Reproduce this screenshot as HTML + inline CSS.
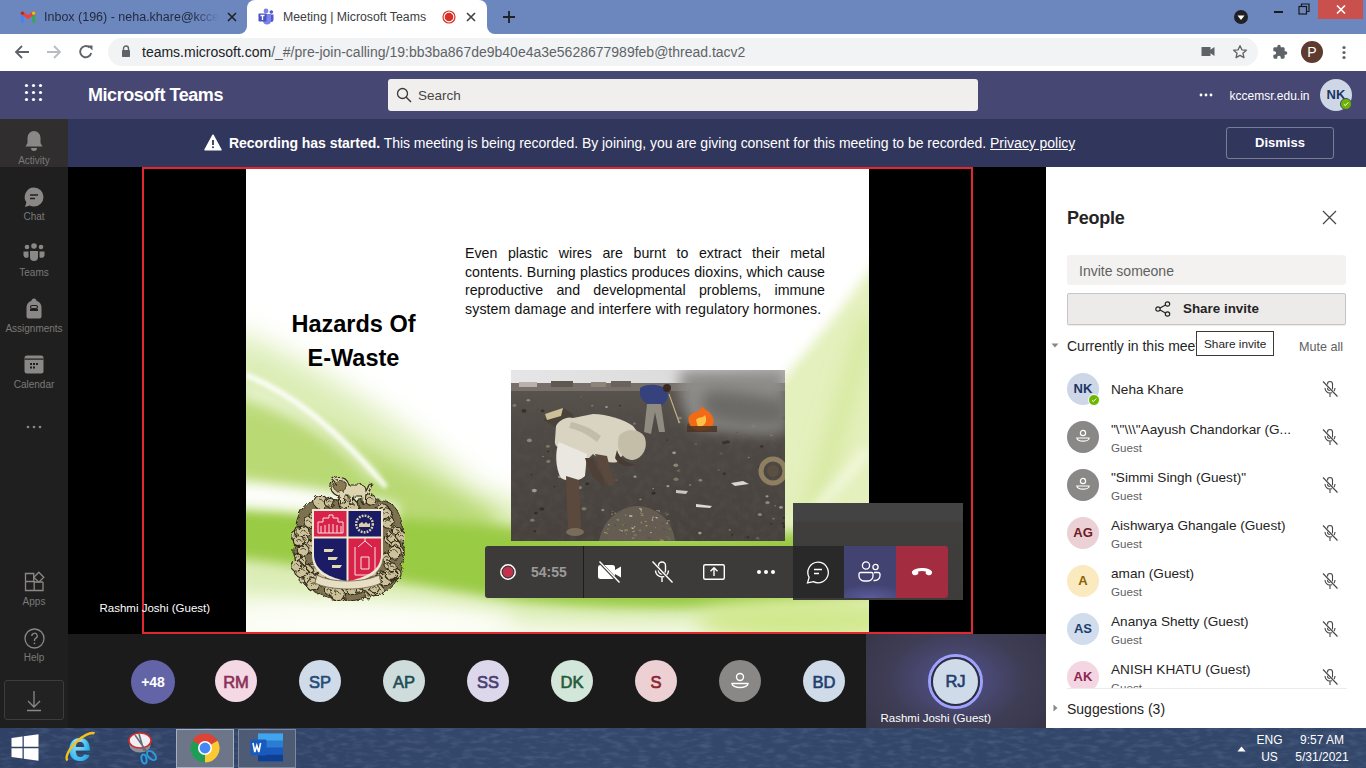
<!DOCTYPE html>
<html><head><meta charset="utf-8">
<style>
*{box-sizing:border-box;margin:0;padding:0}
html,body{width:1366px;height:768px;overflow:hidden;font-family:"Liberation Sans",sans-serif;background:#000}
.abs{position:absolute}
#tabbar{left:0;top:0;width:1366px;height:34px;background:#6b87bf}
#toolbar{left:0;top:34px;width:1366px;height:37px;background:#fff}
#addr{left:109px;top:38px;width:1040px;height:28px;background:#f1f3f4;border-radius:14px}
#thead{left:0;top:71px;width:1366px;height:48px;background:#464775}
#banner{left:68px;top:119px;width:1298px;height:48px;background:#33365d}
#rail{left:0;top:119px;width:68px;height:608px;background:#201f1f}
#stage{left:68px;top:167px;width:978px;height:466px;background:#000}
#strip{left:68px;top:633px;width:978px;height:94px;background:#1f1f1f}
#people{left:1046px;top:167px;width:320px;height:560px;background:#fff}
.rl{left:0;width:68px;text-align:center;font-size:10px;color:#7a7978;white-space:nowrap}
.av{position:absolute;width:42px;height:42px;border-radius:50%;text-align:center;line-height:44px;font-size:16.5px;font-weight:normal;-webkit-text-stroke:0.65px currentColor}
.pav{width:32px;height:32px;border-radius:50%;text-align:center;line-height:32px;font-size:13px;font-weight:bold}
.pn{font-size:13.6px;color:#252424;white-space:nowrap}
.pg{font-size:11.6px;color:#616161;white-space:nowrap}
.tb{font-size:12px;color:#fff;text-align:center;white-space:nowrap}
.sl{color:#000;white-space:nowrap}
.jl{text-align:justify;text-align-last:justify}
#taskbar{left:0;top:727px;width:1366px;height:41px;background:#2a3a5c}
</style></head><body>
<!-- TAB BAR -->
<div class="abs" style="left:0;top:0;width:1366px;height:34px;background:#6c86be"></div>
<!-- gmail tab -->
<svg class="abs" style="left:20px;top:10px" width="16" height="14" viewBox="0 0 16 14">
<path d="M2.3 3.5V11.5" stroke="#4285f4" stroke-width="3" stroke-linecap="round"/>
<path d="M13.7 3.5V11.5" stroke="#34a853" stroke-width="3" stroke-linecap="round"/>
<path d="M2.5 3L8 7.3 13.5 3" fill="none" stroke="#ea4335" stroke-width="3" stroke-linecap="round" stroke-linejoin="round"/>
<circle cx="2.4" cy="3.2" r="1.6" fill="#c5221f"/><circle cx="13.6" cy="3.2" r="1.6" fill="#fbbc04"/>
</svg>
<div class="abs" style="left:44px;top:9.5px;width:175px;height:18px;overflow:hidden;white-space:nowrap;font-size:12.5px;color:#1f2a3c;-webkit-mask-image:linear-gradient(90deg,#000 85%,transparent)">Inbox (196) - neha.khare@kccemsr.edu.in</div>
<svg class="abs" style="left:227px;top:12px" width="10" height="10" viewBox="0 0 10 10"><path d="M1 1L9 9M9 1L1 9" stroke="#202124" stroke-width="1.6"/></svg>
<!-- active tab -->
<div class="abs" style="left:247px;top:0;width:240px;height:34px;background:#fff;border-radius:8px 8px 0 0"></div>
<div class="abs" style="left:239px;top:26px;width:8px;height:8px;background:#fff"></div>
<div class="abs" style="left:239px;top:26px;width:8px;height:8px;background:#6c86be;border-bottom-right-radius:8px"></div>
<div class="abs" style="left:487px;top:26px;width:8px;height:8px;background:#fff"></div>
<div class="abs" style="left:487px;top:26px;width:8px;height:8px;background:#6c86be;border-bottom-left-radius:8px"></div>
<svg class="abs" style="left:258px;top:8px" width="17" height="17" viewBox="0 0 17 17">
<circle cx="8" cy="3" r="2.4" fill="#7b83eb"/><circle cx="13.3" cy="4" r="1.8" fill="#5059c9"/>
<path d="M10.5 6.5h5v5a2.5 2.5 0 0 1-5 0z" fill="#5059c9"/>
<path d="M5 6h8v6.5a4 4 0 0 1-8 0z" fill="#7b83eb"/>
<rect x="0.5" y="5.5" width="8" height="8" rx="0.8" fill="#4b53bc"/>
<path d="M2.5 7.5h4M4.5 7.5v4.5" stroke="#fff" stroke-width="1.3"/>
</svg>
<div id="mtg" class="abs" style="left:283px;top:9.5px;font-size:12.3px;color:#3c4043;white-space:nowrap">Meeting | Microsoft Teams</div>
<svg class="abs" style="left:442px;top:10px" width="14" height="14" viewBox="0 0 14 14"><circle cx="7" cy="7" r="6" fill="none" stroke="#d93025" stroke-width="1.2"/><circle cx="7" cy="7" r="4.3" fill="#d93025"/></svg>
<svg class="abs" style="left:466px;top:12px" width="10" height="10" viewBox="0 0 10 10"><path d="M1 1L9 9M9 1L1 9" stroke="#3c4043" stroke-width="1.6"/></svg>
<svg class="abs" style="left:502px;top:10px" width="14" height="14" viewBox="0 0 14 14"><path d="M7 1V13M1 7H13" stroke="#202124" stroke-width="1.8"/></svg>
<!-- window controls -->
<svg class="abs" style="left:1233px;top:9px" width="16" height="16" viewBox="0 0 16 16"><circle cx="8" cy="8" r="7" fill="#202124"/><path d="M4.5 6.5h7L8 11z" fill="#fff"/></svg>
<div class="abs" style="left:1274px;top:11px;width:9px;height:2px;background:#1a1a1a"></div>
<svg class="abs" style="left:1298px;top:3px" width="12" height="12" viewBox="0 0 12 12"><rect x="1" y="3.5" width="7.5" height="7.5" fill="none" stroke="#1a1a1a" stroke-width="1.2"/><path d="M3.5 3.5V1h7.5v7.5H8.5" fill="none" stroke="#1a1a1a" stroke-width="1.2"/></svg>
<div class="abs" style="left:1318px;top:0;width:45px;height:19px;background:#c9504c"></div>
<svg class="abs" style="left:1336px;top:5px" width="10" height="9" viewBox="0 0 10 9"><path d="M1 0.5L9 8.5M9 0.5L1 8.5" stroke="#fff" stroke-width="1.6"/></svg>
<!-- TOOLBAR -->
<div class="abs" style="left:0;top:34px;width:1366px;height:37px;background:#fff"></div>
<svg class="abs" style="left:14px;top:44px" width="16" height="16" viewBox="0 0 16 16"><path d="M15 8H2.5M8 2L2 8L8 14" fill="none" stroke="#5f6368" stroke-width="1.8"/></svg>
<svg class="abs" style="left:46px;top:44px" width="16" height="16" viewBox="0 0 16 16"><path d="M1 8H13.5M8 2L14 8L8 14" fill="none" stroke="#b9bcc0" stroke-width="1.8"/></svg>
<svg class="abs" style="left:78px;top:44px" width="16" height="16" viewBox="0 0 16 16"><path d="M13.2 9A5.6 5.6 0 1 1 11.5 3.5" fill="none" stroke="#5f6368" stroke-width="1.9"/><path d="M9.5 1.5h5v5z" fill="#5f6368"/></svg>
<div class="abs" style="left:108px;top:38px;width:1150px;height:28px;background:#f1f3f4;border-radius:14px"></div>
<svg class="abs" style="left:121px;top:45px" width="10" height="12" viewBox="0 0 10 12"><path d="M2.5 5V3.5a2.5 2.5 0 0 1 5 0V5" fill="none" stroke="#5f6368" stroke-width="1.4"/><rect x="1" y="5" width="8" height="7" rx="0.7" fill="#5f6368"/></svg>
<div id="url" class="abs" style="left:142px;top:44px;font-size:14px;color:#202124;white-space:nowrap">teams.microsoft.com<span style="color:#5f6368">/_#/pre-join-calling/19:bb3ba867de9b40e4a3e5628677989feb@thread.tacv2</span></div>
<svg class="abs" style="left:1201px;top:46px" width="14" height="11" viewBox="0 0 14 11"><rect x="0.5" y="1" width="9" height="9" rx="0.5" fill="#5f6368"/><path d="M9 4L13.5 1V10L9 7z" fill="#5f6368"/></svg>
<svg class="abs" style="left:1232px;top:44px" width="16" height="16" viewBox="0 0 24 24"><path d="M12 2.5l2.8 6.2 6.7.6-5.1 4.5 1.5 6.6L12 17l-5.9 3.4 1.5-6.6-5.1-4.5 6.7-.6z" fill="none" stroke="#5f6368" stroke-width="2" stroke-linejoin="round"/></svg>
<svg class="abs" style="left:1272px;top:44px" width="16" height="16" viewBox="0 0 24 24"><path d="M20.5 11H19V7c0-1.1-.9-2-2-2h-4V3.5a2.5 2.5 0 0 0-5 0V5H4c-1.1 0-2 .9-2 2v3.8h1.5a2.7 2.7 0 0 1 0 5.4H2V20c0 1.1.9 2 2 2h3.8v-1.5a2.7 2.7 0 0 1 5.4 0V22H17c1.1 0 2-.9 2-2v-4h1.5a2.5 2.5 0 0 0 0-5z" fill="#5f6368"/></svg>
<div class="abs" style="left:1301px;top:41px;width:22px;height:22px;border-radius:50%;background:#5e3a2f;color:#fff;font-size:14px;line-height:22px;text-align:center">P</div>
<svg class="abs" style="left:1341px;top:45px" width="6" height="15" viewBox="0 0 6 15"><circle cx="3" cy="2.5" r="1.6" fill="#5f6368"/><circle cx="3" cy="7.5" r="1.6" fill="#5f6368"/><circle cx="3" cy="12.5" r="1.6" fill="#5f6368"/></svg>
<!-- TEAMS HEADER -->
<div class="abs" style="left:0;top:71px;width:1366px;height:48px;background:#474774"></div>
<svg class="abs" style="left:24px;top:83px" width="20" height="20" viewBox="0 0 20 20" fill="#fff">
<circle cx="2.5" cy="2.5" r="1.6"/><circle cx="9.5" cy="2.5" r="1.6"/><circle cx="16.5" cy="2.5" r="1.6"/>
<circle cx="2.5" cy="9.5" r="1.6"/><circle cx="9.5" cy="9.5" r="1.6"/><circle cx="16.5" cy="9.5" r="1.6"/>
<circle cx="2.5" cy="16.5" r="1.6"/><circle cx="9.5" cy="16.5" r="1.6"/><circle cx="16.5" cy="16.5" r="1.6"/>
</svg>
<div id="mt" class="abs" style="left:88px;top:85px;font-size:18px;letter-spacing:-0.45px;font-weight:bold;color:#fff;white-space:nowrap">Microsoft Teams</div>
<div class="abs" style="left:388px;top:79px;width:590px;height:32px;background:#f0efee;border-radius:3px"></div>
<svg class="abs" style="left:396px;top:87px" width="16" height="16" viewBox="0 0 16 16"><circle cx="6.5" cy="6.5" r="5" fill="none" stroke="#3b3a39" stroke-width="1.3"/><path d="M10 10L15 15" stroke="#3b3a39" stroke-width="1.4"/></svg>
<div id="srch" class="abs" style="left:418px;top:87.5px;font-size:13.5px;color:#484644;white-space:nowrap">Search</div>
<svg class="abs" style="left:1199px;top:93px" width="14" height="4" viewBox="0 0 14 4" fill="#fff"><circle cx="2" cy="2" r="1.4"/><circle cx="7" cy="2" r="1.4"/><circle cx="12" cy="2" r="1.4"/></svg>
<div id="org" class="abs" style="left:1229.5px;top:88.5px;font-size:12px;color:#fff;white-space:nowrap">kccemsr.edu.in</div>
<div class="abs" style="left:1320px;top:79px;width:32px;height:32px;border-radius:50%;background:#cdd7e6;color:#1b3563;font-size:13px;font-weight:bold;line-height:32px;text-align:center">NK</div>
<div class="abs" style="left:1340px;top:98px;width:12px;height:12px;border-radius:50%;background:#6bb700;border:1.5px solid #474774"></div>
<svg class="abs" style="left:1343px;top:101px" width="6" height="6" viewBox="0 0 6 6"><path d="M0.8 3.2L2.3 4.6L5.2 1.5" fill="none" stroke="#fff" stroke-width="1"/></svg>
<!-- BANNER -->
<div class="abs" style="left:68px;top:119px;width:1298px;height:48px;background:#31365c"></div>
<svg class="abs" style="left:204px;top:134px" width="18" height="17" viewBox="0 0 18 17"><path d="M9 1.2L17 15.8H1z" fill="#fff" stroke="#fff" stroke-width="1.5" stroke-linejoin="round"/><path d="M9 6v5" stroke="#31365c" stroke-width="1.8"/><circle cx="9" cy="13.3" r="1" fill="#31365c"/></svg>
<div id="bnr" class="abs" style="left:229px;top:135px;font-size:14px;letter-spacing:-0.03px;color:#fff;white-space:nowrap"><b>Recording has started.</b> This meeting is being recorded. By joining, you are giving consent for this meeting to be recorded. <u>Privacy policy</u></div>
<div class="abs" style="left:1226px;top:127px;width:108px;height:32px;border:1px solid rgba(255,255,255,0.35);border-radius:3px;color:#fff;font-size:13px;font-weight:bold;text-align:center;line-height:30px">Dismiss</div>
<!-- LEFT RAIL -->
<div class="abs" style="left:0;top:119px;width:68px;height:609px;background:#201f1f"></div>
<div class="abs" style="left:0;top:119px;width:68px;height:48px;background:#302e2e"></div>
<div class="rl abs" style="top:155px">Activity</div>
<div class="rl abs" style="top:211px">Chat</div>
<div class="rl abs" style="top:267px">Teams</div>
<div class="rl abs" style="top:323px">Assignments</div>
<div class="rl abs" style="top:379px">Calendar</div>
<div class="rl abs" style="top:596px">Apps</div>
<div class="rl abs" style="top:652px">Help</div>
<svg class="abs" style="left:24px;top:130px" width="20" height="22" viewBox="0 0 20 22" fill="#8a8886"><path d="M10 1a6.5 6.5 0 0 0-6.5 6.5V13L1.5 16.5h17L16.5 13V7.5A6.5 6.5 0 0 0 10 1z"/><path d="M7 18a3 3 0 0 0 6 0z"/></svg>
<svg class="abs" style="left:23px;top:186px" width="22" height="22" viewBox="0 0 22 22"><path d="M11 1.5a9.5 9.5 0 0 1 0 19 9.5 9.5 0 0 1-4.3-1L2 21l1.4-4.6A9.5 9.5 0 0 1 11 1.5z" fill="#8a8886"/><path d="M7 9h8M7 12.5h5" stroke="#201f1f" stroke-width="1.6"/></svg>
<svg class="abs" style="left:23px;top:243px" width="22" height="19" viewBox="0 0 22 19" fill="#8a8886"><circle cx="11" cy="3" r="2.8"/><circle cx="4" cy="4" r="2.3"/><circle cx="18" cy="4" r="2.3"/><path d="M7 8h8v6a4 4 0 0 1-8 0z"/><path d="M0.5 8.5h5v5.5a3 3 0 0 1-5-1.5z"/><path d="M16.5 8.5h5v4a3 3 0 0 1-5 1.5z"/></svg>
<svg class="abs" style="left:24px;top:298px" width="20" height="21" viewBox="0 0 20 21" fill="#8a8886"><path d="M10 0.5c1.5 0 2.5 1 2.5 2.3 3 .8 5 3.5 5 6.7v9a2 2 0 0 1-2 2h-11a2 2 0 0 1-2-2v-9c0-3.2 2-5.9 5-6.7C7.5 1.5 8.5.5 10 .5z"/><path d="M6 11h8v2H6z" fill="#201f1f"/><rect x="6.5" y="7.5" width="7" height="3" rx="1.5" fill="none" stroke="#201f1f" stroke-width="1.2"/></svg>
<svg class="abs" style="left:24px;top:355px" width="20" height="19" viewBox="0 0 20 19"><rect x="0.5" y="0.5" width="19" height="18" rx="2.5" fill="#8a8886"/><rect x="0.5" y="3.5" width="19" height="1.2" fill="#201f1f"/><g fill="#201f1f"><rect x="6" y="8" width="2" height="2"/><rect x="9" y="8" width="2" height="2"/><rect x="12" y="8" width="2" height="2"/><rect x="6" y="11.5" width="2" height="2"/><rect x="9" y="11.5" width="2" height="2"/></g></svg>
<svg class="abs" style="left:26px;top:425px" width="16" height="4" viewBox="0 0 16 4" fill="#8a8886"><circle cx="2" cy="2" r="1.3"/><circle cx="8" cy="2" r="1.3"/><circle cx="14" cy="2" r="1.3"/></svg>
<svg class="abs" style="left:24px;top:571px" width="21" height="21" viewBox="0 0 21 21" fill="none" stroke="#8a8886" stroke-width="1.3"><path d="M1.5 10.5V19.5H19V11"/><path d="M1.5 10.5H10.2V19.5M1.5 6.5V10.5M1.5 6.5V2.5H9.7V10.5M10.2 11H19"/><path d="M14.8 1.2L19.8 6.2 14.8 11.2 9.8 6.2z"/></svg>
<svg class="abs" style="left:24px;top:628px" width="21" height="21" viewBox="0 0 21 21"><circle cx="10.5" cy="10.5" r="9.5" fill="none" stroke="#8a8886" stroke-width="1.3"/><path d="M7.8 8a2.7 2.7 0 1 1 3.8 2.4c-.8.4-1.1.9-1.1 1.7v.8" fill="none" stroke="#8a8886" stroke-width="1.3"/><circle cx="10.5" cy="15.3" r="0.9" fill="#8a8886"/></svg>
<div class="abs" style="left:4px;top:680px;width:60px;height:40px;border:1px solid #3d3c3b;border-radius:3px;background:#232222"></div>
<svg class="abs" style="left:26px;top:690px" width="16" height="22" viewBox="0 0 16 22" fill="none" stroke="#8a8886" stroke-width="1.3"><path d="M8 1v16M2 11l6 6 6-6M1 20.5h14"/></svg>
<!-- STAGE -->
<div class="abs" style="left:68px;top:167px;width:978px;height:467px;background:#000"></div>
<div id="slide" class="abs" style="left:246px;top:169px;width:623px;height:464px;background:#fff;overflow:hidden">
<svg class="abs" style="left:0;top:0" width="623" height="464" viewBox="0 0 623 464">
<defs>
<filter id="b2" filterUnits="userSpaceOnUse" x="-60" y="-60" width="743" height="584"><feGaussianBlur stdDeviation="2"/></filter>
<filter id="b6" filterUnits="userSpaceOnUse" x="-60" y="-60" width="743" height="584"><feGaussianBlur stdDeviation="6"/></filter>
<filter id="b10" filterUnits="userSpaceOnUse" x="-60" y="-60" width="743" height="584"><feGaussianBlur stdDeviation="10"/></filter>
<filter id="b14" filterUnits="userSpaceOnUse" x="-60" y="-60" width="743" height="584"><feGaussianBlur stdDeviation="14"/></filter>
</defs>
<rect width="623" height="464" fill="#fff"/>
<path d="M-20 160 C40 178 150 245 230 318 C300 352 420 360 640 345 L640 480 L-20 480 Z" fill="#dcedb6" filter="url(#b14)"/>
<path d="M640 80 L610 120 C580 160 545 200 520 230 L520 470 L640 470 Z" fill="#e4f0bd" filter="url(#b6)"/>
<path d="M623 150 C600 230 580 300 560 360" stroke="#d3e89a" stroke-width="16" fill="none" filter="url(#b10)"/>
<path d="M623 280 C590 320 560 350 530 380" stroke="#f6fae8" stroke-width="8" fill="none" filter="url(#b6)"/>
<path d="M-20 225 C60 245 150 290 250 345 L250 400 C150 370 60 330 -20 310 Z" fill="#b9d975" filter="url(#b10)"/>
<path d="M-20 340 C80 342 180 352 268 358 C400 372 520 370 640 350 L640 425 C520 440 400 445 268 432 C180 418 80 398 -20 388 Z" fill="#9acb44" filter="url(#b6)"/>
<path d="M-10 325 C40 327 90 333 150 348" stroke="#fff" stroke-width="24" fill="none" filter="url(#b6)" opacity="0.95"/>
<path d="M0 206 C50 226 95 265 140 318" stroke="#fff" stroke-width="5" fill="none" filter="url(#b2)"/>
<path d="M0 222 C50 238 90 268 130 310" stroke="#fff" stroke-width="10" fill="none" filter="url(#b6)" opacity="0.5"/>
<path d="M-20 425 C80 428 180 440 268 452 C400 460 520 456 640 442 L640 480 L-20 480 Z" fill="#f6faea" filter="url(#b10)"/>
<ellipse cx="560" cy="452" rx="110" ry="22" fill="#d2e88e" filter="url(#b10)"/>
<ellipse cx="120" cy="455" rx="150" ry="18" fill="#fdfef8" filter="url(#b10)"/>
</svg>
<svg class="abs" style="left:265px;top:201px" width="274" height="171" viewBox="0 0 274 171">
<defs>
<filter id="pb1" filterUnits="userSpaceOnUse" x="-10" y="-10" width="294" height="191"><feGaussianBlur stdDeviation="0.7"/></filter>
<filter id="pb2" filterUnits="userSpaceOnUse" x="-10" y="-10" width="294" height="191"><feGaussianBlur stdDeviation="2"/></filter>
<filter id="pb3" filterUnits="userSpaceOnUse" x="-30" y="-30" width="334" height="231"><feGaussianBlur stdDeviation="7"/></filter>
<filter id="noise" filterUnits="userSpaceOnUse" x="0" y="21" width="274" height="150"><feTurbulence type="fractalNoise" baseFrequency="0.12" numOctaves="3" seed="3"/><feColorMatrix values="0 0 0 0 0.1  0 0 0 0 0.09  0 0 0 0 0.08  0 0 0 1.6 -0.6"/></filter>
<linearGradient id="gnd" x1="0" y1="0" x2="0" y2="1"><stop offset="0" stop-color="#5e5852"/><stop offset="0.35" stop-color="#4e4944"/><stop offset="1" stop-color="#46413c"/></linearGradient>
<linearGradient id="sky" x1="0" y1="0" x2="1" y2="0"><stop offset="0" stop-color="#e6e6e8"/><stop offset="0.6" stop-color="#dcdcdc"/><stop offset="1" stop-color="#b9b9b9"/></linearGradient>
</defs>
<rect width="274" height="171" fill="url(#gnd)"/>
<rect width="274" height="15" fill="url(#sky)"/>
<g filter="url(#pb1)"><rect y="13" width="274" height="8" fill="#77706a"/><rect x="8" y="12" width="18" height="5" fill="#b8b2aa"/><rect x="40" y="11" width="22" height="6" fill="#5e5850"/><rect x="80" y="12" width="15" height="5" fill="#8c857a"/><rect x="100" y="11" width="20" height="6" fill="#6a645c"/></g>
<rect y="20" width="274" height="151" filter="url(#noise)" opacity="0.5"/>
<ellipse cx="124.0" cy="106.7" rx="1.6" ry="1.1" fill="#b5ad9a" opacity="0.8"/>
<ellipse cx="234.3" cy="52.7" rx="1.6" ry="1.2" fill="#2e2b28" opacity="0.8"/>
<ellipse cx="168.2" cy="52.2" rx="1.3" ry="1.0" fill="#b5ad9a" opacity="0.8"/>
<ellipse cx="24.8" cy="143.2" rx="1.9" ry="1.4" fill="#2a2724" opacity="0.8"/>
<ellipse cx="163.1" cy="82.8" rx="1.9" ry="1.4" fill="#b5ad9a" opacity="0.8"/>
<ellipse cx="168.7" cy="48.0" rx="2.2" ry="1.6" fill="#8a8273" opacity="0.8"/>
<ellipse cx="17.3" cy="30.2" rx="1.8" ry="1.3" fill="#9d9584" opacity="0.8"/>
<ellipse cx="213.2" cy="72.6" rx="2.3" ry="1.6" fill="#2e2b28" opacity="0.8"/>
<ellipse cx="142.2" cy="118.5" rx="0.8" ry="0.6" fill="#b5ad9a" opacity="0.8"/>
<ellipse cx="23.3" cy="120.6" rx="2.5" ry="1.8" fill="#b5ad9a" opacity="0.8"/>
<ellipse cx="272.8" cy="147.7" rx="1.3" ry="0.9" fill="#2a2724" opacity="0.8"/>
<ellipse cx="207.7" cy="99.9" rx="1.0" ry="0.7" fill="#8a8273" opacity="0.8"/>
<ellipse cx="210.0" cy="83.5" rx="1.5" ry="1.1" fill="#6d665c" opacity="0.8"/>
<ellipse cx="262.5" cy="148.7" rx="1.2" ry="0.9" fill="#8a8273" opacity="0.8"/>
<ellipse cx="254.0" cy="32.6" rx="2.5" ry="1.8" fill="#b5ad9a" opacity="0.8"/>
<ellipse cx="108.9" cy="35.7" rx="1.2" ry="0.8" fill="#2a2724" opacity="0.8"/>
<ellipse cx="184.9" cy="74.2" rx="1.4" ry="1.0" fill="#6d665c" opacity="0.8"/>
<ellipse cx="264.2" cy="135.7" rx="1.1" ry="0.8" fill="#8a8273" opacity="0.8"/>
<ellipse cx="193.7" cy="26.6" rx="2.2" ry="1.6" fill="#b5ad9a" opacity="0.8"/>
<ellipse cx="48.7" cy="106.7" rx="1.7" ry="1.2" fill="#b5ad9a" opacity="0.8"/>
<ellipse cx="270.0" cy="137.4" rx="1.9" ry="1.4" fill="#b5ad9a" opacity="0.8"/>
<ellipse cx="31.9" cy="86.4" rx="0.8" ry="0.6" fill="#9d9584" opacity="0.8"/>
<ellipse cx="236.8" cy="167.3" rx="1.4" ry="1.0" fill="#2e2b28" opacity="0.8"/>
<ellipse cx="242.5" cy="55.8" rx="2.5" ry="1.8" fill="#b5ad9a" opacity="0.8"/>
<ellipse cx="165.0" cy="109.2" rx="2.5" ry="1.8" fill="#8a8273" opacity="0.8"/>
<ellipse cx="58.4" cy="62.7" rx="1.4" ry="1.0" fill="#2e2b28" opacity="0.8"/>
<ellipse cx="81.2" cy="35.7" rx="1.2" ry="0.9" fill="#8a8273" opacity="0.8"/>
<ellipse cx="174.4" cy="27.3" rx="1.5" ry="1.0" fill="#6d665c" opacity="0.8"/>
<ellipse cx="124.2" cy="165.0" rx="2.2" ry="1.6" fill="#b5ad9a" opacity="0.8"/>
<ellipse cx="37.2" cy="81.4" rx="1.1" ry="0.8" fill="#2a2724" opacity="0.8"/>
<ellipse cx="248.9" cy="144.4" rx="2.1" ry="1.5" fill="#9d9584" opacity="0.8"/>
<ellipse cx="43.4" cy="116.8" rx="1.2" ry="0.8" fill="#2e2b28" opacity="0.8"/>
<ellipse cx="260.3" cy="153.8" rx="1.0" ry="0.7" fill="#2e2b28" opacity="0.8"/>
<ellipse cx="13.0" cy="40.9" rx="2.5" ry="1.8" fill="#2e2b28" opacity="0.8"/>
<ellipse cx="65.3" cy="127.9" rx="1.5" ry="1.1" fill="#6d665c" opacity="0.8"/>
<ellipse cx="247.9" cy="96.7" rx="1.1" ry="0.8" fill="#2e2b28" opacity="0.8"/>
<ellipse cx="197.4" cy="35.0" rx="1.6" ry="1.2" fill="#9d9584" opacity="0.8"/>
<ellipse cx="179.1" cy="114.9" rx="1.3" ry="0.9" fill="#8a8273" opacity="0.8"/>
<ellipse cx="251.4" cy="54.8" rx="1.0" ry="0.7" fill="#8a8273" opacity="0.8"/>
<ellipse cx="112.7" cy="61.4" rx="1.1" ry="0.8" fill="#8a8273" opacity="0.8"/>
<ellipse cx="101.0" cy="108.5" rx="1.0" ry="0.7" fill="#9d9584" opacity="0.8"/>
<ellipse cx="37.9" cy="90.8" rx="1.9" ry="1.4" fill="#6d665c" opacity="0.8"/>
<ellipse cx="189.4" cy="110.3" rx="1.8" ry="1.3" fill="#9d9584" opacity="0.8"/>
<ellipse cx="253.1" cy="94.3" rx="2.0" ry="1.4" fill="#6d665c" opacity="0.8"/>
<ellipse cx="263.8" cy="28.1" rx="1.0" ry="0.7" fill="#2a2724" opacity="0.8"/>
<ellipse cx="18.4" cy="70.4" rx="2.5" ry="1.8" fill="#9d9584" opacity="0.8"/>
<ellipse cx="20.6" cy="104.7" rx="0.9" ry="0.7" fill="#2a2724" opacity="0.8"/>
<ellipse cx="256.5" cy="132.6" rx="2.2" ry="1.6" fill="#9d9584" opacity="0.8"/>
<ellipse cx="250.7" cy="76.4" rx="1.6" ry="1.2" fill="#2a2724" opacity="0.8"/>
<ellipse cx="21.3" cy="150.2" rx="2.3" ry="1.6" fill="#8a8273" opacity="0.8"/>
<ellipse cx="156.9" cy="116.2" rx="1.5" ry="1.1" fill="#b5ad9a" opacity="0.8"/>
<ellipse cx="3.4" cy="35.5" rx="1.9" ry="1.4" fill="#8a8273" opacity="0.8"/>
<ellipse cx="272.2" cy="153.4" rx="1.4" ry="1.0" fill="#2a2724" opacity="0.8"/>
<ellipse cx="256.0" cy="126.3" rx="1.6" ry="1.1" fill="#b5ad9a" opacity="0.8"/>
<ellipse cx="229.7" cy="37.2" rx="0.9" ry="0.6" fill="#2e2b28" opacity="0.8"/>
<ellipse cx="164.8" cy="95.2" rx="2.4" ry="1.7" fill="#9d9584" opacity="0.8"/>
<ellipse cx="30.9" cy="138.9" rx="2.4" ry="1.7" fill="#2a2724" opacity="0.8"/>
<ellipse cx="70.1" cy="26.7" rx="1.1" ry="0.8" fill="#6d665c" opacity="0.8"/>
<ellipse cx="167.6" cy="100.7" rx="1.9" ry="1.4" fill="#6d665c" opacity="0.8"/>
<ellipse cx="121.1" cy="155.2" rx="1.5" ry="1.1" fill="#6d665c" opacity="0.8"/>
<ellipse cx="68.7" cy="117.6" rx="2.3" ry="1.7" fill="#9d9584" opacity="0.8"/>
<ellipse cx="105.3" cy="110.1" rx="1.2" ry="0.9" fill="#6d665c" opacity="0.8"/>
<ellipse cx="36.9" cy="76.2" rx="2.0" ry="1.5" fill="#8a8273" opacity="0.8"/>
<ellipse cx="260.3" cy="65.4" rx="1.0" ry="0.7" fill="#9d9584" opacity="0.8"/>
<ellipse cx="129.2" cy="160.2" rx="1.5" ry="1.1" fill="#b5ad9a" opacity="0.8"/>
<ellipse cx="142.5" cy="123.1" rx="2.2" ry="1.6" fill="#2a2724" opacity="0.8"/>
<ellipse cx="269.1" cy="91.1" rx="2.2" ry="1.6" fill="#8a8273" opacity="0.8"/>
<ellipse cx="76.2" cy="113.7" rx="2.0" ry="1.5" fill="#2a2724" opacity="0.8"/>
<ellipse cx="156.3" cy="70.1" rx="0.9" ry="0.6" fill="#2e2b28" opacity="0.8"/>
<ellipse cx="37.2" cy="91.4" rx="2.1" ry="1.5" fill="#8a8273" opacity="0.8"/>
<ellipse cx="73.0" cy="138.8" rx="2.5" ry="1.8" fill="#8a8273" opacity="0.8"/>
<ellipse cx="31.6" cy="40.9" rx="1.9" ry="1.4" fill="#2e2b28" opacity="0.8"/>
<ellipse cx="221.2" cy="164.9" rx="1.2" ry="0.8" fill="#2a2724" opacity="0.8"/>
<ellipse cx="225.7" cy="62.4" rx="0.9" ry="0.6" fill="#2a2724" opacity="0.8"/>
<ellipse cx="129.4" cy="129.3" rx="1.2" ry="0.9" fill="#9d9584" opacity="0.8"/>
<ellipse cx="213.3" cy="103.8" rx="1.7" ry="1.2" fill="#2e2b28" opacity="0.8"/>
<ellipse cx="273.1" cy="48.2" rx="2.4" ry="1.7" fill="#2a2724" opacity="0.8"/>
<ellipse cx="23.9" cy="161.2" rx="1.5" ry="1.1" fill="#2a2724" opacity="0.8"/>
<ellipse cx="123.4" cy="53.7" rx="1.5" ry="1.1" fill="#8a8273" opacity="0.8"/>
<ellipse cx="155.9" cy="153.4" rx="1.6" ry="1.2" fill="#6d665c" opacity="0.8"/>
<ellipse cx="178.5" cy="54.9" rx="2.3" ry="1.6" fill="#2a2724" opacity="0.8"/>
<ellipse cx="218.7" cy="159.9" rx="1.2" ry="0.9" fill="#8a8273" opacity="0.8"/>
<ellipse cx="246.6" cy="168.2" rx="1.7" ry="1.2" fill="#6d665c" opacity="0.8"/>
<ellipse cx="216.7" cy="71.8" rx="2.3" ry="1.6" fill="#2a2724" opacity="0.8"/>
<ellipse cx="95.5" cy="37.1" rx="1.4" ry="1.0" fill="#b5ad9a" opacity="0.8"/>
<ellipse cx="115.5" cy="65.2" rx="1.2" ry="0.9" fill="#8a8273" opacity="0.8"/>
<ellipse cx="237.7" cy="87.6" rx="1.1" ry="0.8" fill="#8a8273" opacity="0.8"/>
<ellipse cx="91.8" cy="140.0" rx="1.6" ry="1.2" fill="#9d9584" opacity="0.8"/>
<ellipse cx="274.0" cy="156.5" rx="2.3" ry="1.6" fill="#2e2b28" opacity="0.8"/>
<ellipse cx="188.9" cy="163.1" rx="1.8" ry="1.3" fill="#b5ad9a" opacity="0.8"/>
<path d="M170 0H274V62C250 66 215 60 185 58 172 45 166 18 170 0z" fill="#8f8d8a" filter="url(#pb3)"/>
<path d="M195 22C215 18 245 26 274 30V55C245 58 220 55 200 50 190 42 188 30 195 22z" fill="#6c6a67" filter="url(#pb3)"/>
<g filter="url(#pb1)">
<path d="M178 46C184 40 188 44 191 36 195 42 199 40 202 48 205 55 198 61 188 61 180 60 176 52 178 46z" fill="#f26b12"/>
<path d="M185 50C188 46 191 49 194 45 197 51 194 57 187 57z" fill="#ffc04a"/>
<rect x="176" y="56" width="30" height="6" fill="#4a3020" opacity="0.8"/>
<path d="M129 18C136 13 150 14 156 20 159 28 154 36 146 36 138 36 130 32 129 24z" fill="#34427e"/>
<path d="M136 34L133 62 140 64 144 42 148 62 154 62 150 34z" fill="#8f8b80"/>
<circle cx="156" cy="18" r="4" fill="#3a2c22"/>
<path d="M158 24L168 52" stroke="#c8b48a" stroke-width="1.1"/>
<path d="M32 50L52 38 62 44 62 50 46 58z" fill="#4a4238"/>
<path d="M34 44L52 38 50 46 36 50z" fill="#cdbf98"/>
<path d="M62 48C56 46 48 50 45 56L44 70C43 76 47 78 51 78L55 90C58 95 66 96 72 94L82 84C88 90 98 94 106 92L116 80C120 72 124 66 128 64L122 56C114 50 96 44 82 44z" fill="#d9d3c2"/>
<path d="M60 52C70 54 80 58 90 66L86 72C76 64 68 60 58 58z" fill="#b9b2a0" opacity="0.7"/>
<path d="M48 72C44 80 44 98 50 108 56 112 68 112 74 106L76 84z" fill="#e9e7df"/>
<path d="M55 106L57 158 66 162 70 158 68 110z" fill="#5c4a3c"/>
<path d="M84 84C88 98 92 106 98 116L104 114C100 102 98 94 96 86z" fill="#5c4a3c"/>
<path d="M74 88C78 102 84 110 94 118L92 108C88 100 84 94 82 88z" fill="#4f4036"/>
<path d="M108 66C114 58 130 58 134 68 137 78 132 88 122 90 112 90 104 80 108 66z" fill="#c4bda8"/>
<path d="M106 80C108 88 116 94 124 94 118 98 108 96 104 88z" fill="#4a3a30"/>
<ellipse cx="64" cy="162" rx="9" ry="4" fill="#7a6c5a"/>
<path d="M88 171C92 150 108 136 128 136 148 138 162 152 164 171z" fill="#6a6256" opacity="0.85"/>
</g>
<path d="M139.8 163.0l0.2 -0.8" stroke="#d8cfb8" stroke-width="1.2"/>
<path d="M136.5 155.3l-1.9 0.7" stroke="#a08a5a" stroke-width="1.4"/>
<path d="M151.6 158.1l2.8 1.9" stroke="#5a5044" stroke-width="1.0"/>
<path d="M132.2 144.6l-3.1 -2.0" stroke="#a08a5a" stroke-width="0.9"/>
<path d="M130.0 139.5l0.4 2.0" stroke="#d8cfb8" stroke-width="0.7"/>
<path d="M101.1 143.5l-0.3 1.7" stroke="#a08a5a" stroke-width="1.2"/>
<path d="M121.3 146.1l-3.0 -0.3" stroke="#d8cfb8" stroke-width="1.3"/>
<path d="M153.5 153.7l-3.1 -0.3" stroke="#5a5044" stroke-width="0.6"/>
<path d="M111.9 161.2l-3.7 -1.4" stroke="#c9bfa5" stroke-width="0.6"/>
<path d="M113.5 161.9l1.0 -1.6" stroke="#8f8470" stroke-width="1.2"/>
<path d="M103.0 154.8l1.7 0.8" stroke="#5a5044" stroke-width="1.3"/>
<path d="M96.5 158.9l0.9 0.2" stroke="#a08a5a" stroke-width="1.3"/>
<path d="M129.7 145.2l2.8 0.4" stroke="#8f8470" stroke-width="1.3"/>
<path d="M110.1 162.4l3.2 -0.7" stroke="#5a5044" stroke-width="0.9"/>
<path d="M155.0 145.2l3.1 -1.5" stroke="#8f8470" stroke-width="0.8"/>
<path d="M142.2 146.6l-0.5 1.8" stroke="#c9bfa5" stroke-width="1.0"/>
<path d="M140.8 144.6l1.5 -1.9" stroke="#6b7a4a" stroke-width="0.8"/>
<path d="M139.4 168.1l-3.1 0.0" stroke="#5a5044" stroke-width="1.2"/>
<path d="M127.7 160.6l2.4 -0.1" stroke="#8f8470" stroke-width="0.6"/>
<path d="M144.5 158.2l-0.1 -1.2" stroke="#a08a5a" stroke-width="0.7"/>
<path d="M106.2 143.2l3.4 -1.6" stroke="#5a5044" stroke-width="0.6"/>
<path d="M156.8 153.2l-1.4 -0.1" stroke="#c9bfa5" stroke-width="1.0"/>
<path d="M123.0 157.8l1.1 -1.8" stroke="#c9bfa5" stroke-width="0.8"/>
<path d="M121.5 149.9l-0.8 -1.2" stroke="#5a5044" stroke-width="0.7"/>
<path d="M128.3 138.5l2.4 0.8" stroke="#c9bfa5" stroke-width="1.3"/>
<path d="M135.9 151.3l-2.5 0.3" stroke="#a08a5a" stroke-width="0.9"/>
<path d="M144.6 147.2l2.0 1.1" stroke="#c9bfa5" stroke-width="1.3"/>
<path d="M121.4 167.6l1.6 1.1" stroke="#a08a5a" stroke-width="1.2"/>
<path d="M121.4 161.8l2.4 -0.8" stroke="#c9bfa5" stroke-width="0.7"/>
<path d="M152.7 170.7l-3.6 -0.9" stroke="#a08a5a" stroke-width="1.4"/>
<path d="M114.4 145.1l0.6 0.1" stroke="#d8cfb8" stroke-width="0.9"/>
<path d="M160.0 159.2l-3.0 -0.4" stroke="#6b7a4a" stroke-width="1.1"/>
<path d="M102.5 141.6l-1.9 -0.4" stroke="#8f8470" stroke-width="0.6"/>
<path d="M107.7 150.4l-1.9 -0.9" stroke="#c9bfa5" stroke-width="0.9"/>
<path d="M130.1 151.7l0.5 2.0" stroke="#a08a5a" stroke-width="1.1"/>
<path d="M147.6 140.5l1.3 1.8" stroke="#a08a5a" stroke-width="0.9"/>
<path d="M156.0 150.7l2.8 0.2" stroke="#8f8470" stroke-width="1.1"/>
<path d="M122.9 154.3l0.2 0.4" stroke="#5a5044" stroke-width="0.9"/>
<path d="M113.6 159.6l3.4 0.7" stroke="#a08a5a" stroke-width="1.2"/>
<path d="M96.7 163.5l-3.7 -1.4" stroke="#a08a5a" stroke-width="1.2"/>
<path d="M120.3 167.6l-0.8 0.3" stroke="#6b7a4a" stroke-width="1.2"/>
<path d="M115.8 164.3l-0.6 -0.1" stroke="#8f8470" stroke-width="1.4"/>
<path d="M110.8 155.3l3.3 -1.4" stroke="#6b7a4a" stroke-width="1.4"/>
<path d="M110.9 161.3l1.0 -0.2" stroke="#c9bfa5" stroke-width="0.8"/>
<path d="M98.4 155.4l-1.1 -1.4" stroke="#c9bfa5" stroke-width="0.9"/>
<path d="M134.1 159.1l-0.6 1.1" stroke="#6b7a4a" stroke-width="1.0"/>
<path d="M159.8 169.4l-3.0 -0.1" stroke="#6b7a4a" stroke-width="1.0"/>
<path d="M115.1 154.7l-1.8 0.4" stroke="#5a5044" stroke-width="1.2"/>
<path d="M140.4 144.3l2.0 -1.2" stroke="#5a5044" stroke-width="0.8"/>
<path d="M158.7 168.2l-3.7 -1.8" stroke="#6b7a4a" stroke-width="0.8"/>
<path d="M122.6 158.6l-2.2 -0.9" stroke="#c9bfa5" stroke-width="1.2"/>
<path d="M154.3 143.3l1.0 -0.5" stroke="#8f8470" stroke-width="1.0"/>
<path d="M108.7 149.3l-2.9 1.5" stroke="#6b7a4a" stroke-width="1.2"/>
<path d="M124.1 165.1l-0.4 1.0" stroke="#8f8470" stroke-width="0.9"/>
<path d="M104.8 143.1l-1.4 0.2" stroke="#a08a5a" stroke-width="1.2"/>
<path d="M154.9 152.1l0.6 -0.2" stroke="#5a5044" stroke-width="0.9"/>
<path d="M130.3 152.3l-0.1 0.7" stroke="#a08a5a" stroke-width="0.8"/>
<path d="M145.4 140.5l3.3 0.4" stroke="#8f8470" stroke-width="1.2"/>
<path d="M127.2 163.2l-1.7 -1.4" stroke="#5a5044" stroke-width="0.9"/>
<path d="M142.2 150.1l-1.4 -0.2" stroke="#c9bfa5" stroke-width="1.1"/>
<g filter="url(#pb1)"><path d="M220 113l12 -2 6 3 -14 2z" fill="#d8d8d0"/><path d="M165 120l12 1 -2 3 -10 -1z" fill="#c8c8c0"/><path d="M185 134l16 2 -2 2 -14 -1z" fill="#dcdcd6"/>
<ellipse cx="262" cy="101" rx="12" ry="12" fill="none" stroke="#8d7f60" stroke-width="5"/>
<ellipse cx="262" cy="101" rx="6" ry="6" fill="#5a5040"/></g>
</svg>
<svg class="abs" style="left:45px;top:306px" width="114" height="126" viewBox="0 0 114 126">
<defs><filter id="eb" filterUnits="userSpaceOnUse" x="-5" y="-5" width="124" height="136"><feTurbulence type="turbulence" baseFrequency="0.15" numOctaves="2" seed="4" result="t"/><feDisplacementMap in="SourceGraphic" in2="t" scale="4"/><feGaussianBlur stdDeviation="0.45"/></filter>
<filter id="eb2" filterUnits="userSpaceOnUse" x="-5" y="-5" width="124" height="136"><feGaussianBlur stdDeviation="0.45"/></filter></defs>
<g filter="url(#eb)">
<path d="M14 28C6 36 2 50 4 62 0 74 2 90 8 102 14 114 30 122 57 125 84 122 100 114 106 102 112 90 114 74 110 62 112 50 108 36 100 28 86 22 74 22 57 26 40 22 28 22 14 28z" fill="#7d7250" stroke="#2e2616" stroke-width="1"/>
<circle cx="21.5" cy="92.4" r="5.7" fill="#cbc29a" stroke="#2e2616" stroke-width="1.1"/>
<path d="M18.6 92.4q2.9 -3.4 5.7 0" fill="none" stroke="#3a301c" stroke-width="0.9"/>
<circle cx="88.0" cy="104.4" r="5.3" fill="#cbc29a" stroke="#2e2616" stroke-width="1.1"/>
<path d="M85.4 104.4q2.6 -3.2 5.3 0" fill="none" stroke="#3a301c" stroke-width="0.9"/>
<circle cx="4.3" cy="59.8" r="5.5" fill="#cbc29a" stroke="#2e2616" stroke-width="1.1"/>
<path d="M1.6 59.8q2.8 -3.3 5.5 0" fill="none" stroke="#3a301c" stroke-width="0.9"/>
<circle cx="11.3" cy="103.0" r="4.3" fill="#cbc29a" stroke="#2e2616" stroke-width="1.1"/>
<path d="M9.2 103.0q2.2 -2.6 4.3 0" fill="none" stroke="#3a301c" stroke-width="0.9"/>
<circle cx="28.7" cy="26.3" r="7.0" fill="#cbc29a" stroke="#2e2616" stroke-width="1.1"/>
<path d="M25.2 26.3q3.5 -4.2 7.0 0" fill="none" stroke="#3a301c" stroke-width="0.9"/>
<circle cx="82.3" cy="111.3" r="5.7" fill="#cbc29a" stroke="#2e2616" stroke-width="1.1"/>
<path d="M79.5 111.3q2.8 -3.4 5.7 0" fill="none" stroke="#3a301c" stroke-width="0.9"/>
<circle cx="7.6" cy="55.6" r="5.2" fill="#cbc29a" stroke="#2e2616" stroke-width="1.1"/>
<path d="M5.0 55.6q2.6 -3.1 5.2 0" fill="none" stroke="#3a301c" stroke-width="0.9"/>
<circle cx="90.7" cy="34.7" r="6.7" fill="#cbc29a" stroke="#2e2616" stroke-width="1.1"/>
<path d="M87.3 34.7q3.4 -4.0 6.7 0" fill="none" stroke="#3a301c" stroke-width="0.9"/>
<circle cx="95.8" cy="46.0" r="6.2" fill="#cbc29a" stroke="#2e2616" stroke-width="1.1"/>
<path d="M92.7 46.0q3.1 -3.7 6.2 0" fill="none" stroke="#3a301c" stroke-width="0.9"/>
<circle cx="98.8" cy="99.0" r="6.2" fill="#cbc29a" stroke="#2e2616" stroke-width="1.1"/>
<path d="M95.7 99.0q3.1 -3.7 6.2 0" fill="none" stroke="#3a301c" stroke-width="0.9"/>
<circle cx="17.0" cy="70.6" r="6.4" fill="#cbc29a" stroke="#2e2616" stroke-width="1.1"/>
<path d="M13.8 70.6q3.2 -3.8 6.4 0" fill="none" stroke="#3a301c" stroke-width="0.9"/>
<circle cx="98.1" cy="63.8" r="4.8" fill="#cbc29a" stroke="#2e2616" stroke-width="1.1"/>
<path d="M95.7 63.8q2.4 -2.9 4.8 0" fill="none" stroke="#3a301c" stroke-width="0.9"/>
<circle cx="109.5" cy="61.4" r="3.6" fill="#cbc29a" stroke="#2e2616" stroke-width="1.1"/>
<path d="M107.7 61.4q1.8 -2.2 3.6 0" fill="none" stroke="#3a301c" stroke-width="0.9"/>
<circle cx="13.9" cy="95.2" r="7.0" fill="#cbc29a" stroke="#2e2616" stroke-width="1.1"/>
<path d="M10.4 95.2q3.5 -4.2 7.0 0" fill="none" stroke="#3a301c" stroke-width="0.9"/>
<circle cx="40.9" cy="116.6" r="4.7" fill="#cbc29a" stroke="#2e2616" stroke-width="1.1"/>
<path d="M38.6 116.6q2.4 -2.8 4.7 0" fill="none" stroke="#3a301c" stroke-width="0.9"/>
<circle cx="90.3" cy="101.3" r="4.8" fill="#cbc29a" stroke="#2e2616" stroke-width="1.1"/>
<path d="M87.8 101.3q2.4 -2.9 4.8 0" fill="none" stroke="#3a301c" stroke-width="0.9"/>
<circle cx="47.1" cy="122.9" r="6.9" fill="#cbc29a" stroke="#2e2616" stroke-width="1.1"/>
<path d="M43.7 122.9q3.4 -4.1 6.9 0" fill="none" stroke="#3a301c" stroke-width="0.9"/>
<circle cx="66.6" cy="112.1" r="5.2" fill="#cbc29a" stroke="#2e2616" stroke-width="1.1"/>
<path d="M64.0 112.1q2.6 -3.1 5.2 0" fill="none" stroke="#3a301c" stroke-width="0.9"/>
<circle cx="96.9" cy="38.6" r="3.7" fill="#cbc29a" stroke="#2e2616" stroke-width="1.1"/>
<path d="M95.0 38.6q1.9 -2.2 3.7 0" fill="none" stroke="#3a301c" stroke-width="0.9"/>
<circle cx="89.4" cy="100.9" r="5.2" fill="#cbc29a" stroke="#2e2616" stroke-width="1.1"/>
<path d="M86.8 100.9q2.6 -3.1 5.2 0" fill="none" stroke="#3a301c" stroke-width="0.9"/>
<circle cx="11.4" cy="56.5" r="6.6" fill="#cbc29a" stroke="#2e2616" stroke-width="1.1"/>
<path d="M8.0 56.5q3.3 -4.0 6.6 0" fill="none" stroke="#3a301c" stroke-width="0.9"/>
<circle cx="105.6" cy="75.6" r="6.1" fill="#cbc29a" stroke="#2e2616" stroke-width="1.1"/>
<path d="M102.6 75.6q3.0 -3.6 6.1 0" fill="none" stroke="#3a301c" stroke-width="0.9"/>
<circle cx="92.9" cy="103.1" r="6.6" fill="#cbc29a" stroke="#2e2616" stroke-width="1.1"/>
<path d="M89.6 103.1q3.3 -4.0 6.6 0" fill="none" stroke="#3a301c" stroke-width="0.9"/>
<circle cx="65.6" cy="108.6" r="4.6" fill="#cbc29a" stroke="#2e2616" stroke-width="1.1"/>
<path d="M63.3 108.6q2.3 -2.7 4.6 0" fill="none" stroke="#3a301c" stroke-width="0.9"/>
<circle cx="76.6" cy="119.3" r="3.6" fill="#cbc29a" stroke="#2e2616" stroke-width="1.1"/>
<path d="M74.9 119.3q1.8 -2.1 3.6 0" fill="none" stroke="#3a301c" stroke-width="0.9"/>
<circle cx="94.3" cy="81.6" r="4.4" fill="#cbc29a" stroke="#2e2616" stroke-width="1.1"/>
<path d="M92.1 81.6q2.2 -2.6 4.4 0" fill="none" stroke="#3a301c" stroke-width="0.9"/>
<circle cx="47.0" cy="119.8" r="6.7" fill="#cbc29a" stroke="#2e2616" stroke-width="1.1"/>
<path d="M43.7 119.8q3.3 -4.0 6.7 0" fill="none" stroke="#3a301c" stroke-width="0.9"/>
<circle cx="95.9" cy="88.8" r="3.9" fill="#cbc29a" stroke="#2e2616" stroke-width="1.1"/>
<path d="M94.0 88.8q2.0 -2.4 3.9 0" fill="none" stroke="#3a301c" stroke-width="0.9"/>
<circle cx="21.6" cy="40.8" r="4.8" fill="#cbc29a" stroke="#2e2616" stroke-width="1.1"/>
<path d="M19.2 40.8q2.4 -2.9 4.8 0" fill="none" stroke="#3a301c" stroke-width="0.9"/>
<circle cx="8.9" cy="94.5" r="6.6" fill="#cbc29a" stroke="#2e2616" stroke-width="1.1"/>
<path d="M5.6 94.5q3.3 -3.9 6.6 0" fill="none" stroke="#3a301c" stroke-width="0.9"/>
<circle cx="86.1" cy="102.7" r="3.5" fill="#cbc29a" stroke="#2e2616" stroke-width="1.1"/>
<path d="M84.3 102.7q1.8 -2.1 3.5 0" fill="none" stroke="#3a301c" stroke-width="0.9"/>
<circle cx="53.2" cy="28.5" r="6.2" fill="#cbc29a" stroke="#2e2616" stroke-width="1.1"/>
<path d="M50.1 28.5q3.1 -3.7 6.2 0" fill="none" stroke="#3a301c" stroke-width="0.9"/>
<circle cx="37.2" cy="26.3" r="4.9" fill="#cbc29a" stroke="#2e2616" stroke-width="1.1"/>
<path d="M34.8 26.3q2.4 -2.9 4.9 0" fill="none" stroke="#3a301c" stroke-width="0.9"/>
<circle cx="36.8" cy="113.9" r="4.5" fill="#cbc29a" stroke="#2e2616" stroke-width="1.1"/>
<path d="M34.5 113.9q2.3 -2.7 4.5 0" fill="none" stroke="#3a301c" stroke-width="0.9"/>
<circle cx="107.5" cy="58.2" r="4.6" fill="#cbc29a" stroke="#2e2616" stroke-width="1.1"/>
<path d="M105.2 58.2q2.3 -2.8 4.6 0" fill="none" stroke="#3a301c" stroke-width="0.9"/>
<circle cx="6.1" cy="87.8" r="5.0" fill="#cbc29a" stroke="#2e2616" stroke-width="1.1"/>
<path d="M3.6 87.8q2.5 -3.0 5.0 0" fill="none" stroke="#3a301c" stroke-width="0.9"/>
<circle cx="9.2" cy="66.3" r="4.4" fill="#cbc29a" stroke="#2e2616" stroke-width="1.1"/>
<path d="M7.0 66.3q2.2 -2.6 4.4 0" fill="none" stroke="#3a301c" stroke-width="0.9"/>
<circle cx="80.0" cy="112.8" r="6.2" fill="#cbc29a" stroke="#2e2616" stroke-width="1.1"/>
<path d="M76.9 112.8q3.1 -3.7 6.2 0" fill="none" stroke="#3a301c" stroke-width="0.9"/>
<circle cx="74.8" cy="109.6" r="5.9" fill="#cbc29a" stroke="#2e2616" stroke-width="1.1"/>
<path d="M71.8 109.6q3.0 -3.6 5.9 0" fill="none" stroke="#3a301c" stroke-width="0.9"/>
<circle cx="101.2" cy="61.4" r="5.7" fill="#cbc29a" stroke="#2e2616" stroke-width="1.1"/>
<path d="M98.3 61.4q2.8 -3.4 5.7 0" fill="none" stroke="#3a301c" stroke-width="0.9"/>
<circle cx="62.6" cy="30.1" r="4.6" fill="#cbc29a" stroke="#2e2616" stroke-width="1.1"/>
<path d="M60.4 30.1q2.3 -2.7 4.6 0" fill="none" stroke="#3a301c" stroke-width="0.9"/>
<circle cx="104.0" cy="97.7" r="5.1" fill="#cbc29a" stroke="#2e2616" stroke-width="1.1"/>
<path d="M101.5 97.7q2.6 -3.1 5.1 0" fill="none" stroke="#3a301c" stroke-width="0.9"/>
<circle cx="104.8" cy="54.9" r="4.4" fill="#cbc29a" stroke="#2e2616" stroke-width="1.1"/>
<path d="M102.6 54.9q2.2 -2.6 4.4 0" fill="none" stroke="#3a301c" stroke-width="0.9"/>
<circle cx="93.6" cy="37.6" r="5.9" fill="#cbc29a" stroke="#2e2616" stroke-width="1.1"/>
<path d="M90.7 37.6q2.9 -3.5 5.9 0" fill="none" stroke="#3a301c" stroke-width="0.9"/>
<circle cx="103.7" cy="69.6" r="5.0" fill="#cbc29a" stroke="#2e2616" stroke-width="1.1"/>
<path d="M101.2 69.6q2.5 -3.0 5.0 0" fill="none" stroke="#3a301c" stroke-width="0.9"/>
<circle cx="78.7" cy="23.9" r="5.3" fill="#cbc29a" stroke="#2e2616" stroke-width="1.1"/>
<path d="M76.1 23.9q2.6 -3.2 5.3 0" fill="none" stroke="#3a301c" stroke-width="0.9"/>
<circle cx="8.2" cy="84.0" r="6.0" fill="#cbc29a" stroke="#2e2616" stroke-width="1.1"/>
<path d="M5.2 84.0q3.0 -3.6 6.0 0" fill="none" stroke="#3a301c" stroke-width="0.9"/>
<circle cx="61.7" cy="31.6" r="4.6" fill="#cbc29a" stroke="#2e2616" stroke-width="1.1"/>
<path d="M59.4 31.6q2.3 -2.7 4.6 0" fill="none" stroke="#3a301c" stroke-width="0.9"/>
<circle cx="52.1" cy="113.2" r="4.8" fill="#cbc29a" stroke="#2e2616" stroke-width="1.1"/>
<path d="M49.7 113.2q2.4 -2.9 4.8 0" fill="none" stroke="#3a301c" stroke-width="0.9"/>
<circle cx="18.3" cy="102.8" r="6.4" fill="#cbc29a" stroke="#2e2616" stroke-width="1.1"/>
<path d="M15.1 102.8q3.2 -3.8 6.4 0" fill="none" stroke="#3a301c" stroke-width="0.9"/>
<circle cx="60.1" cy="27.0" r="4.2" fill="#cbc29a" stroke="#2e2616" stroke-width="1.1"/>
<path d="M58.0 27.0q2.1 -2.5 4.2 0" fill="none" stroke="#3a301c" stroke-width="0.9"/>
<circle cx="27.9" cy="103.8" r="6.5" fill="#cbc29a" stroke="#2e2616" stroke-width="1.1"/>
<path d="M24.6 103.8q3.2 -3.9 6.5 0" fill="none" stroke="#3a301c" stroke-width="0.9"/>
<circle cx="5.9" cy="81.4" r="3.8" fill="#cbc29a" stroke="#2e2616" stroke-width="1.1"/>
<path d="M4.0 81.4q1.9 -2.3 3.8 0" fill="none" stroke="#3a301c" stroke-width="0.9"/>
<circle cx="99.4" cy="98.2" r="6.2" fill="#cbc29a" stroke="#2e2616" stroke-width="1.1"/>
<path d="M96.3 98.2q3.1 -3.7 6.2 0" fill="none" stroke="#3a301c" stroke-width="0.9"/>
<circle cx="11.2" cy="74.2" r="5.9" fill="#cbc29a" stroke="#2e2616" stroke-width="1.1"/>
<path d="M8.2 74.2q2.9 -3.5 5.9 0" fill="none" stroke="#3a301c" stroke-width="0.9"/>
<circle cx="59.6" cy="30.0" r="6.4" fill="#cbc29a" stroke="#2e2616" stroke-width="1.1"/>
<path d="M56.4 30.0q3.2 -3.8 6.4 0" fill="none" stroke="#3a301c" stroke-width="0.9"/>
<circle cx="21.2" cy="108.8" r="6.3" fill="#cbc29a" stroke="#2e2616" stroke-width="1.1"/>
<path d="M18.0 108.8q3.2 -3.8 6.3 0" fill="none" stroke="#3a301c" stroke-width="0.9"/>
<circle cx="100.1" cy="91.3" r="4.3" fill="#cbc29a" stroke="#2e2616" stroke-width="1.1"/>
<path d="M97.9 91.3q2.1 -2.6 4.3 0" fill="none" stroke="#3a301c" stroke-width="0.9"/>
<circle cx="86.4" cy="114.1" r="5.4" fill="#cbc29a" stroke="#2e2616" stroke-width="1.1"/>
<path d="M83.8 114.1q2.7 -3.2 5.4 0" fill="none" stroke="#3a301c" stroke-width="0.9"/>
<circle cx="45.4" cy="118.1" r="6.8" fill="#cbc29a" stroke="#2e2616" stroke-width="1.1"/>
<path d="M42.0 118.1q3.4 -4.1 6.8 0" fill="none" stroke="#3a301c" stroke-width="0.9"/>
<circle cx="102.7" cy="76.7" r="6.6" fill="#cbc29a" stroke="#2e2616" stroke-width="1.1"/>
<path d="M99.4 76.7q3.3 -4.0 6.6 0" fill="none" stroke="#3a301c" stroke-width="0.9"/>
<circle cx="82.4" cy="112.0" r="4.8" fill="#cbc29a" stroke="#2e2616" stroke-width="1.1"/>
<path d="M80.1 112.0q2.4 -2.9 4.8 0" fill="none" stroke="#3a301c" stroke-width="0.9"/>
<circle cx="12.8" cy="63.4" r="4.1" fill="#cbc29a" stroke="#2e2616" stroke-width="1.1"/>
<path d="M10.7 63.4q2.1 -2.5 4.1 0" fill="none" stroke="#3a301c" stroke-width="0.9"/>
<circle cx="6.9" cy="65.1" r="5.5" fill="#cbc29a" stroke="#2e2616" stroke-width="1.1"/>
<path d="M4.1 65.1q2.8 -3.3 5.5 0" fill="none" stroke="#3a301c" stroke-width="0.9"/>
<circle cx="6.8" cy="89.9" r="4.2" fill="#cbc29a" stroke="#2e2616" stroke-width="1.1"/>
<path d="M4.7 89.9q2.1 -2.5 4.2 0" fill="none" stroke="#3a301c" stroke-width="0.9"/>
<circle cx="59.4" cy="113.3" r="5.3" fill="#cbc29a" stroke="#2e2616" stroke-width="1.1"/>
<path d="M56.8 113.3q2.6 -3.2 5.3 0" fill="none" stroke="#3a301c" stroke-width="0.9"/>
<circle cx="17.0" cy="46.5" r="5.0" fill="#cbc29a" stroke="#2e2616" stroke-width="1.1"/>
<path d="M14.5 46.5q2.5 -3.0 5.0 0" fill="none" stroke="#3a301c" stroke-width="0.9"/>
<circle cx="52.6" cy="25.6" r="6.4" fill="#cbc29a" stroke="#2e2616" stroke-width="1.1"/>
<path d="M49.4 25.6q3.2 -3.8 6.4 0" fill="none" stroke="#3a301c" stroke-width="0.9"/>
<circle cx="109.3" cy="60.4" r="4.9" fill="#cbc29a" stroke="#2e2616" stroke-width="1.1"/>
<path d="M106.9 60.4q2.4 -2.9 4.9 0" fill="none" stroke="#3a301c" stroke-width="0.9"/>
<circle cx="4.4" cy="89.8" r="5.5" fill="#cbc29a" stroke="#2e2616" stroke-width="1.1"/>
<path d="M1.6 89.8q2.8 -3.3 5.5 0" fill="none" stroke="#3a301c" stroke-width="0.9"/>
<path d="M39 13C38 7 42 2 47 1.5 52 1 56 4 57 9L68 9C72 9 74 11 74 15 76 12 77 9 78 7L80 8C79 12 77 16 75 19L74 28H70.5L69.5 20H62L61 28H57.5L57 20H53L52 28H48.5L48 20C44 20 40 17 39 13z" fill="#ddd4b0" stroke="#2e2616" stroke-width="1.1"/>
<path d="M41 8C43 4 50 3 54 7 55 12 52 16 47 16 43 15 41 12 41 8z" fill="#8a7a52" stroke="#2e2616" stroke-width="0.8"/>
<circle cx="44" cy="9" r="1" fill="#2e2616"/>
</g>
<g filter="url(#eb2)">
<path d="M21 34H92V80C92 98 76 106 56.5 108 37 106 21 98 21 80z" fill="#efe8d2"/>
<path d="M23 36H55.5V61.5H23z" fill="#d9234a"/>
<path d="M57.5 36H90V61.5H57.5z" fill="#1b1d66"/>
<path d="M23 63.5H55.5V106C40 103 23 96 23 80z" fill="#1b1d66"/>
<path d="M57.5 63.5H90V80C90 96 73 103 57.5 106z" fill="#d9234a"/>
<g fill="none" stroke="#f3e3e0" stroke-width="1"><path d="M27 58V47H32V43H38V40H42V43H47V47H52V58z"/><path d="M30 58V51M34 58V50M38 58V49M42 58V49M46 58V50M50 58V51"/><path d="M64 72V100H84V72M67 72L74 66 81 72M70 82h8v12h-8zM74 62v4"/></g>
<circle cx="73.5" cy="49" r="8.3" fill="none" stroke="#d9d0a8" stroke-width="2.4" stroke-dasharray="1.8 1.2"/>
<path d="M68 52h11v-4l-2 1-2-2-2 2-2-2-3 2z" fill="#d9d0a8"/>
<g fill="#e3dbb0"><path d="M33 74h10l-2 3h-8z"/><path d="M37 82h10l-2 3h-8z"/><path d="M41 90h10l-2 3h-8z"/></g>
<path d="M26 100C40 108 72 108 88 100L90 108C74 116 40 116 24 108z" fill="#e6dfc5" stroke="#6a5e40" stroke-width="0.8"/>
</g>
</svg>
<div id="t1" class="abs sl" style="left:45.5px;top:141.5px;font-size:23.5px;font-weight:bold">Hazards Of</div>
<div id="t2" class="abs sl" style="left:61.5px;top:175.5px;font-size:23.5px;font-weight:bold">E-Waste</div>
<div class="abs" style="left:219px;top:75px;width:360px;font-size:14.2px;line-height:18.7px;color:#111">
<div class="jl" id="l1">Even plastic wires are burnt to extract their metal</div>
<div class="jl" id="l2">contents. Burning plastics produces dioxins, which cause</div>
<div class="jl" id="l3">reproductive and developmental problems, immune</div>
<div id="l4" style="white-space:nowrap;letter-spacing:0.1px">system damage and interfere with regulatory hormones.</div>
</div>
</div>
<div class="abs" style="left:142px;top:167px;width:831px;height:467px;border:2px solid #e0282e"></div>
<div id="rjname1" class="abs" style="left:99.5px;top:602px;font-size:11.5px;color:#fff;white-space:nowrap">Rashmi Joshi (Guest)</div>
<!-- STRIP -->
<div class="abs" style="left:68px;top:634px;width:978px;height:94px;background:#1c1b1b"></div>
<div class="abs" style="left:866px;top:634px;width:180px;height:94px;background:radial-gradient(ellipse 105px 75px at 90px 46px,#53528a 0%,#4a4975 30%,#3e3d55 65%,#38374a 100%)"></div>
<div class="av abs" style="left:131px;top:660px;width:44px;height:44px;line-height:45px;background:#6264a7;color:#fff;font-size:14px;font-weight:bold;-webkit-text-stroke:0">+48</div>
<div class="av abs" style="left:215px;top:660px;background:#f4d8e3;color:#8b3158">RM</div>
<div class="av abs" style="left:299px;top:660px;background:#cfdbe8;color:#274b77">SP</div>
<div class="av abs" style="left:383px;top:660px;background:#cfdcdc;color:#1f4c54">AP</div>
<div class="av abs" style="left:467px;top:660px;background:#dcd7ea;color:#4a3f73">SS</div>
<div class="av abs" style="left:551px;top:660px;background:#d3e6da;color:#235b3c">DK</div>
<div class="av abs" style="left:635px;top:660px;background:#ecd0d3;color:#8a2630">S</div>
<div class="av abs" style="left:719px;top:660px;background:#8a8886"></div>
<svg class="abs" style="left:727px;top:669px" width="26" height="26" viewBox="0 0 26 26" fill="none" stroke="#fff" stroke-width="1.4"><circle cx="13" cy="8" r="3.5"/><path d="M5 14.5h16a8 4 0 0 1-16 0z"/></svg>
<div class="av abs" style="left:803px;top:660px;background:#cfdbe8;color:#1e3f6e">BD</div>
<div class="abs" style="left:928px;top:654px;width:55px;height:55px;border-radius:50%;border:3px solid #9ea2ff"></div>
<div class="abs" style="left:931px;top:657px;width:49px;height:49px;border-radius:50%;border:2px solid #2d2c40"></div>
<div class="av abs" style="left:933px;top:659px;width:45px;height:45px;line-height:45px;background:#cfdbe8;color:#1e3f6e">RJ</div>
<div id="rjname2" class="abs" style="left:880.5px;top:712px;font-size:11.5px;color:#fff;white-space:nowrap">Rashmi Joshi (Guest)</div>
<!-- CONTROL BAR -->
<div class="abs" style="left:793px;top:503px;width:170px;height:97px;background:linear-gradient(#454444 0,#434242 18px,#3f3e3d 19px,#3d3c3b 100%)"></div>
<div class="abs" style="left:485px;top:546px;width:308px;height:52px;background:#3c3b39;border-radius:3px 0 0 3px"></div>
<div class="abs" style="left:583px;top:546px;width:1px;height:52px;background:#1e1d1c"></div>
<svg class="abs" style="left:499px;top:563px" width="18" height="18" viewBox="0 0 18 18"><circle cx="9" cy="9" r="7.2" fill="none" stroke="#fff" stroke-width="1.5"/><circle cx="9" cy="9" r="5.3" fill="#c4314b"/></svg>
<div id="tmr" class="abs" style="left:531px;top:564px;font-size:14px;font-weight:bold;color:#9c9a98;white-space:nowrap">54:55</div>
<svg class="abs" style="left:597px;top:560px" width="26" height="24" viewBox="0 0 26 24"><path d="M3.5 5h12a2.5 2.5 0 0 1 2.5 2.5v9a2.5 2.5 0 0 1-2.5 2.5h-12A2.5 2.5 0 0 1 1 16.5v-9A2.5 2.5 0 0 1 3.5 5z" fill="#fff"/><path d="M18 10l6-3.5v11L18 14z" fill="#fff"/><path d="M2 1.5L22 22.5" stroke="#3c3b39" stroke-width="3"/><path d="M2.5 1.5L22.5 22.5" stroke="#fff" stroke-width="1.4"/></svg>
<svg class="abs" style="left:650px;top:560px" width="24" height="24" viewBox="0 0 24 24" fill="none" stroke="#fff" stroke-width="1.4"><rect x="8.5" y="2" width="7" height="12" rx="3.5"/><path d="M5.5 10.5a6.5 6.5 0 0 0 13 0M12 17v5"/><path d="M2 1.5L22 22.5" stroke="#3c3b39" stroke-width="3"/><path d="M2.5 1.5L22.5 22.5"/></svg>
<svg class="abs" style="left:702px;top:563px" width="24" height="18" viewBox="0 0 24 18" fill="none" stroke="#fff" stroke-width="1.4"><rect x="1.7" y="1.7" width="20.6" height="14.6" rx="1.5"/><path d="M12 13V5M8.5 8.3L12 4.8l3.5 3.5"/></svg>
<svg class="abs" style="left:756px;top:569px" width="20" height="6" viewBox="0 0 20 6" fill="#fff"><circle cx="3" cy="3" r="2"/><circle cx="10" cy="3" r="2"/><circle cx="17" cy="3" r="2"/></svg>
<div class="abs" style="left:793px;top:546px;width:51px;height:52px;background:#2a2929"></div>
<div class="abs" style="left:844px;top:546px;width:52px;height:52px;background:radial-gradient(ellipse 40px 14px at 26px 52px,#5b5c9c,#424370 100%)"></div>
<div class="abs" style="left:896px;top:546px;width:52px;height:52px;background:#a42c40;border-radius:0 3px 3px 0"></div>
<svg class="abs" style="left:806px;top:561px" width="24" height="23" viewBox="0 0 24 23" fill="none" stroke="#fff" stroke-width="1.3"><path d="M12 1.2a10.3 10.3 0 1 1-4.6 19.5L1.5 22l1.6-5.6A10.3 10.3 0 0 1 12 1.2z"/><path d="M8 8.5h8M8 12.5h5"/></svg>
<svg class="abs" style="left:858px;top:561px" width="24" height="22" viewBox="0 0 24 22" fill="none" stroke="#fff" stroke-width="1.3"><circle cx="8" cy="4.5" r="3.6"/><circle cx="17.5" cy="6" r="2.6"/><path d="M2.5 11.5h11a1.5 1.5 0 0 1 1.5 1.5v2a5 5 0 0 1-5 5H6a5 5 0 0 1-5-5v-2a1.5 1.5 0 0 1 1.5-1.5z"/><path d="M16 11.5h4a2 2 0 0 1 2 2v1a5 5 0 0 1-5 5h-1.5"/></svg>
<svg class="abs" style="left:911px;top:567px" width="22" height="10" viewBox="0 0 22 10"><path d="M11 1C6 1 2.5 2.5 1.2 4.3 0.6 5.2 1 6.5 1.6 7.3 2.3 8.3 3.6 8.6 4.6 8.2L6.3 7.5C7.1 7.2 7.5 6.3 7.3 5.5L7.1 4.6C8.4 4.2 9.7 4 11 4s2.6.2 3.9.6l-.2.9c-.2.8.2 1.7 1 2l1.7.7c1 .4 2.3.1 3-.9.6-.8 1-2.1.4-3C19.5 2.5 16 1 11 1z" fill="#fff"/></svg>
<!-- PEOPLE PANEL -->
<div class="abs" style="left:1046px;top:167px;width:320px;height:561px;background:#fff"></div>
<div id="ppl" class="abs" style="left:1067px;top:207.5px;font-size:18px;letter-spacing:-0.25px;font-weight:bold;color:#252424;white-space:nowrap">People</div>
<svg class="abs" style="left:1322px;top:210px" width="15" height="15" viewBox="0 0 15 15"><path d="M1 1L14 14M14 1L1 14" stroke="#484644" stroke-width="1.2"/></svg>
<div class="abs" style="left:1067px;top:255px;width:279px;height:30px;background:#f3f2f1;border-radius:3px"></div>
<div id="inv" class="abs" style="left:1079px;top:263px;font-size:14px;color:#616161;white-space:nowrap">Invite someone</div>
<div class="abs" style="left:1067px;top:293px;width:279px;height:32px;background:#edebe9;border:1px solid #c8c6c4;border-radius:2px;box-shadow:0 1px 1px rgba(0,0,0,0.08)"></div>
<svg class="abs" style="left:1155px;top:301px" width="16" height="16" viewBox="0 0 16 16" fill="none" stroke="#252424" stroke-width="1.2"><circle cx="12.5" cy="3" r="2.2"/><circle cx="12.5" cy="13" r="2.2"/><circle cx="3" cy="8" r="2.2"/><path d="M5 7L10.5 4M5 9l5.5 3"/></svg>
<div id="shr" class="abs" style="left:1183px;top:301px;font-size:13.4px;font-weight:bold;color:#252424;white-space:nowrap">Share invite</div>
<svg class="abs" style="left:1051px;top:343px" width="8" height="5" viewBox="0 0 8 5"><path d="M0.5 0.5h7L4 4.5z" fill="#8a8886"/></svg>
<div id="cur" class="abs" style="left:1067px;top:338px;font-size:14px;color:#252424;white-space:nowrap;width:132px;overflow:hidden">Currently in this meeting</div>
<div id="mute" class="abs" style="left:1299px;top:339.5px;font-size:12.6px;color:#616161;white-space:nowrap">Mute all</div>
<div class="abs" style="left:1196px;top:331px;width:78px;height:25px;background:#fff;border:1px solid #3b3a39"></div>
<div id="tip" class="abs" style="left:1204px;top:336.5px;font-size:11.8px;color:#252424;white-space:nowrap">Share invite</div>
<div class="abs" style="left:1046px;top:363px;width:320px;height:325px;overflow:hidden">
<div class="pav abs" style="left:21px;top:10px;background:#cdd7e8;color:#1b3563">NK</div>
<div class="pn abs" style="left:65px;top:19px">Neha Khare</div>
<svg class="abs" style="left:275px;top:17px" width="18" height="18" viewBox="0 0 18 18" fill="none" stroke="#484644" stroke-width="1.1"><rect x="6.5" y="1.5" width="5" height="9" rx="2.5"/><path d="M4 8a5 5 0 0 0 10 0M9 13v4"/><path d="M2 1.5L16.5 16.5" stroke="#fff" stroke-width="2.5"/><path d="M2 1.5L16.5 16.5"/></svg>
<div class="pav abs" style="left:21px;top:58px;background:#8a8886"></div>
<svg class="abs" style="left:27px;top:64px" width="20" height="20" viewBox="0 0 20 20" fill="none" stroke="#fff" stroke-width="1.2"><circle cx="10" cy="6" r="2.6"/><path d="M3.8 11h12.4a6.2 3.2 0 0 1-12.4 0z"/></svg>
<div class="pn abs" style="left:65px;top:59px">"\"\\\"Aayush Chandorkar (G...</div>
<div class="pg abs" style="left:65px;top:78px">Guest</div>
<svg class="abs" style="left:275px;top:65px" width="18" height="18" viewBox="0 0 18 18" fill="none" stroke="#484644" stroke-width="1.1"><rect x="6.5" y="1.5" width="5" height="9" rx="2.5"/><path d="M4 8a5 5 0 0 0 10 0M9 13v4"/><path d="M2 1.5L16.5 16.5" stroke="#fff" stroke-width="2.5"/><path d="M2 1.5L16.5 16.5"/></svg>
<div class="pav abs" style="left:21px;top:106px;background:#8a8886"></div>
<svg class="abs" style="left:27px;top:112px" width="20" height="20" viewBox="0 0 20 20" fill="none" stroke="#fff" stroke-width="1.2"><circle cx="10" cy="6" r="2.6"/><path d="M3.8 11h12.4a6.2 3.2 0 0 1-12.4 0z"/></svg>
<div class="pn abs" style="left:65px;top:107px">"Simmi Singh (Guest)"</div>
<div class="pg abs" style="left:65px;top:126px">Guest</div>
<svg class="abs" style="left:275px;top:113px" width="18" height="18" viewBox="0 0 18 18" fill="none" stroke="#484644" stroke-width="1.1"><rect x="6.5" y="1.5" width="5" height="9" rx="2.5"/><path d="M4 8a5 5 0 0 0 10 0M9 13v4"/><path d="M2 1.5L16.5 16.5" stroke="#fff" stroke-width="2.5"/><path d="M2 1.5L16.5 16.5"/></svg>
<div class="pav abs" style="left:21px;top:154px;background:#ebd0d6;color:#6d1a24">AG</div>
<div class="pn abs" style="left:65px;top:155px">Aishwarya Ghangale (Guest)</div>
<div class="pg abs" style="left:65px;top:174px">Guest</div>
<svg class="abs" style="left:275px;top:161px" width="18" height="18" viewBox="0 0 18 18" fill="none" stroke="#484644" stroke-width="1.1"><rect x="6.5" y="1.5" width="5" height="9" rx="2.5"/><path d="M4 8a5 5 0 0 0 10 0M9 13v4"/><path d="M2 1.5L16.5 16.5" stroke="#fff" stroke-width="2.5"/><path d="M2 1.5L16.5 16.5"/></svg>
<div class="pav abs" style="left:21px;top:202px;background:#fbeac0;color:#8a6300">A</div>
<div class="pn abs" style="left:65px;top:203px">aman (Guest)</div>
<div class="pg abs" style="left:65px;top:222px">Guest</div>
<svg class="abs" style="left:275px;top:209px" width="18" height="18" viewBox="0 0 18 18" fill="none" stroke="#484644" stroke-width="1.1"><rect x="6.5" y="1.5" width="5" height="9" rx="2.5"/><path d="M4 8a5 5 0 0 0 10 0M9 13v4"/><path d="M2 1.5L16.5 16.5" stroke="#fff" stroke-width="2.5"/><path d="M2 1.5L16.5 16.5"/></svg>
<div class="pav abs" style="left:21px;top:250px;background:#d1ddec;color:#1d3d6c">AS</div>
<div class="pn abs" style="left:65px;top:251px">Ananya Shetty (Guest)</div>
<div class="pg abs" style="left:65px;top:270px">Guest</div>
<svg class="abs" style="left:275px;top:257px" width="18" height="18" viewBox="0 0 18 18" fill="none" stroke="#484644" stroke-width="1.1"><rect x="6.5" y="1.5" width="5" height="9" rx="2.5"/><path d="M4 8a5 5 0 0 0 10 0M9 13v4"/><path d="M2 1.5L16.5 16.5" stroke="#fff" stroke-width="2.5"/><path d="M2 1.5L16.5 16.5"/></svg>
<div class="pav abs" style="left:21px;top:298px;background:#f3d6e2;color:#8e2450">AK</div>
<div class="pn abs" style="left:65px;top:299px">ANISH KHATU (Guest)</div>
<div class="pg abs" style="left:65px;top:318px">Guest</div>
<svg class="abs" style="left:275px;top:305px" width="18" height="18" viewBox="0 0 18 18" fill="none" stroke="#484644" stroke-width="1.1"><rect x="6.5" y="1.5" width="5" height="9" rx="2.5"/><path d="M4 8a5 5 0 0 0 10 0M9 13v4"/><path d="M2 1.5L16.5 16.5" stroke="#fff" stroke-width="2.5"/><path d="M2 1.5L16.5 16.5"/></svg>
</div>
<div class="abs" style="left:1090px;top:403px"></div>
<div class="abs" style="left:1088px;top:394px;width:12px;height:12px;border-radius:50%;background:#6bb700;border:1.5px solid #fff"></div>
<svg class="abs" style="left:1091px;top:397px" width="6" height="6" viewBox="0 0 6 6"><path d="M0.8 3.2L2.3 4.6L5.2 1.5" fill="none" stroke="#fff" stroke-width="1"/></svg>
<div class="abs" style="left:1067px;top:688px;width:280px;height:1px;background:#edebe9"></div>
<svg class="abs" style="left:1053px;top:704px" width="5" height="8" viewBox="0 0 5 8"><path d="M0.5 0.5v7L4.5 4z" fill="#8a8886"/></svg>
<div id="sugg" class="abs" style="left:1067px;top:701px;font-size:14px;color:#252424;white-space:nowrap">Suggestions (3)</div>
<!-- TASKBAR -->
<div class="abs" style="left:0;top:728px;width:1366px;height:40px;background:linear-gradient(90deg,#2f4266,#34486c 40%,#32466a 70%,#33476b)"></div>
<svg class="abs" style="left:0;top:728px" width="1366" height="40"><filter id="tbn" x="0" y="0" width="100%" height="100%"><feTurbulence type="fractalNoise" baseFrequency="0.08 0.25" numOctaves="2" seed="9"/><feColorMatrix values="0 0 0 0 0.55  0 0 0 0 0.65  0 0 0 0 0.8  0 0 0 0.9 -0.4"/></filter><rect width="1366" height="40" filter="url(#tbn)" opacity="0.35"/></svg>
<svg class="abs" style="left:11px;top:734px" width="28" height="27" viewBox="0 0 28 27" fill="#fff"><path d="M0.5 4L11.5 2.5V12.8H0.5z"/><path d="M12.8 2.3L27.5 0.3V12.8H12.8z"/><path d="M0.5 14.2h11v10.4L0.5 23z"/><path d="M12.8 14.2h14.7v12.5L12.8 24.8z"/></svg>
<svg class="abs" style="left:64px;top:730px" width="34" height="34" viewBox="0 0 34 34">
<defs><radialGradient id="ieg" cx="0.4" cy="0.35" r="0.7"><stop offset="0" stop-color="#a8eaff"/><stop offset="0.6" stop-color="#40bcf0"/><stop offset="1" stop-color="#1a8fd8"/></radialGradient></defs>
<text x="4" y="31" font-family="Liberation Sans" font-weight="bold" font-size="42" fill="url(#ieg)">e</text>
<path d="M30.5 3.5C27 1.5 18 6 11 13S1 28 3.5 30.5" fill="none" stroke="#f2c21a" stroke-width="2.4"/>
</svg>
<svg class="abs" style="left:127px;top:731px" width="32" height="34" viewBox="0 0 32 34">
<ellipse cx="13" cy="14.5" rx="10.5" ry="7" fill="#9b9ca6" opacity="0.85"/>
<ellipse cx="13" cy="9.5" rx="11" ry="7.5" fill="#eeeef4" stroke="#d42a2a" stroke-width="1.5"/>
<path d="M8 4L20 21M12 3L17 20" stroke="#6a6a70" stroke-width="1.6"/>
<ellipse cx="24.5" cy="24.5" rx="3.2" ry="5.5" transform="rotate(-45 24.5 24.5)" fill="none" stroke="#2a9be0" stroke-width="2"/>
<ellipse cx="17" cy="28" rx="2.5" ry="4.5" transform="rotate(-10 17 28)" fill="none" stroke="#2a9be0" stroke-width="2"/>
</svg>
<div class="abs" style="left:176px;top:729px;width:58px;height:39px;background:#6d7689;border:1px solid #a9b0bd"></div>
<svg class="abs" style="left:190px;top:733px" width="30" height="30" viewBox="0 0 30 30">
<path d="M15 15L2.44 7.75A14.5 14.5 0 0 1 27.56 7.75z" fill="#db4437"/>
<path d="M15 15L27.56 7.75A14.5 14.5 0 0 1 15 29.5z" fill="#fcc934"/>
<path d="M15 15L15 29.5A14.5 14.5 0 0 1 2.44 7.75z" fill="#1e9e55"/>
<circle cx="15" cy="15" r="7" fill="#fff"/><circle cx="15" cy="15" r="5.4" fill="#4587f4"/></svg>
<div class="abs" style="left:238px;top:729px;width:58px;height:39px;background:#4e5b75;border:1px solid #7d889c"></div>
<svg class="abs" style="left:250px;top:733px" width="34" height="29" viewBox="0 0 34 29"><rect x="8" y="0.5" width="25" height="28" rx="1" fill="#2b7cd3"/><rect x="8" y="0.5" width="25" height="7" fill="#41a5ee"/><rect x="8" y="14.5" width="25" height="7" fill="#185abd"/><rect x="8" y="21.5" width="25" height="7" fill="#103f91"/><rect x="0.5" y="6.5" width="16" height="16" rx="1" fill="#185abd"/><path d="M3 10l1.8 9 2-6.5 2 6.5L10.6 10" fill="none" stroke="#fff" stroke-width="1.6"/></svg>
<svg class="abs" style="left:1237px;top:746px" width="9" height="6" viewBox="0 0 9 6"><path d="M0.5 5.5L4.5 0.5 8.5 5.5z" fill="#fff"/></svg>
<div class="tb abs" style="left:1256px;top:733px;width:27px">ENG</div>
<div class="tb abs" style="left:1256px;top:750px;width:27px">US</div>
<div class="tb abs" style="left:1290px;top:733px;width:64px">9:57 AM</div>
<div class="tb abs" style="left:1290px;top:750px;width:64px">5/31/2021</div>
</body></html>
